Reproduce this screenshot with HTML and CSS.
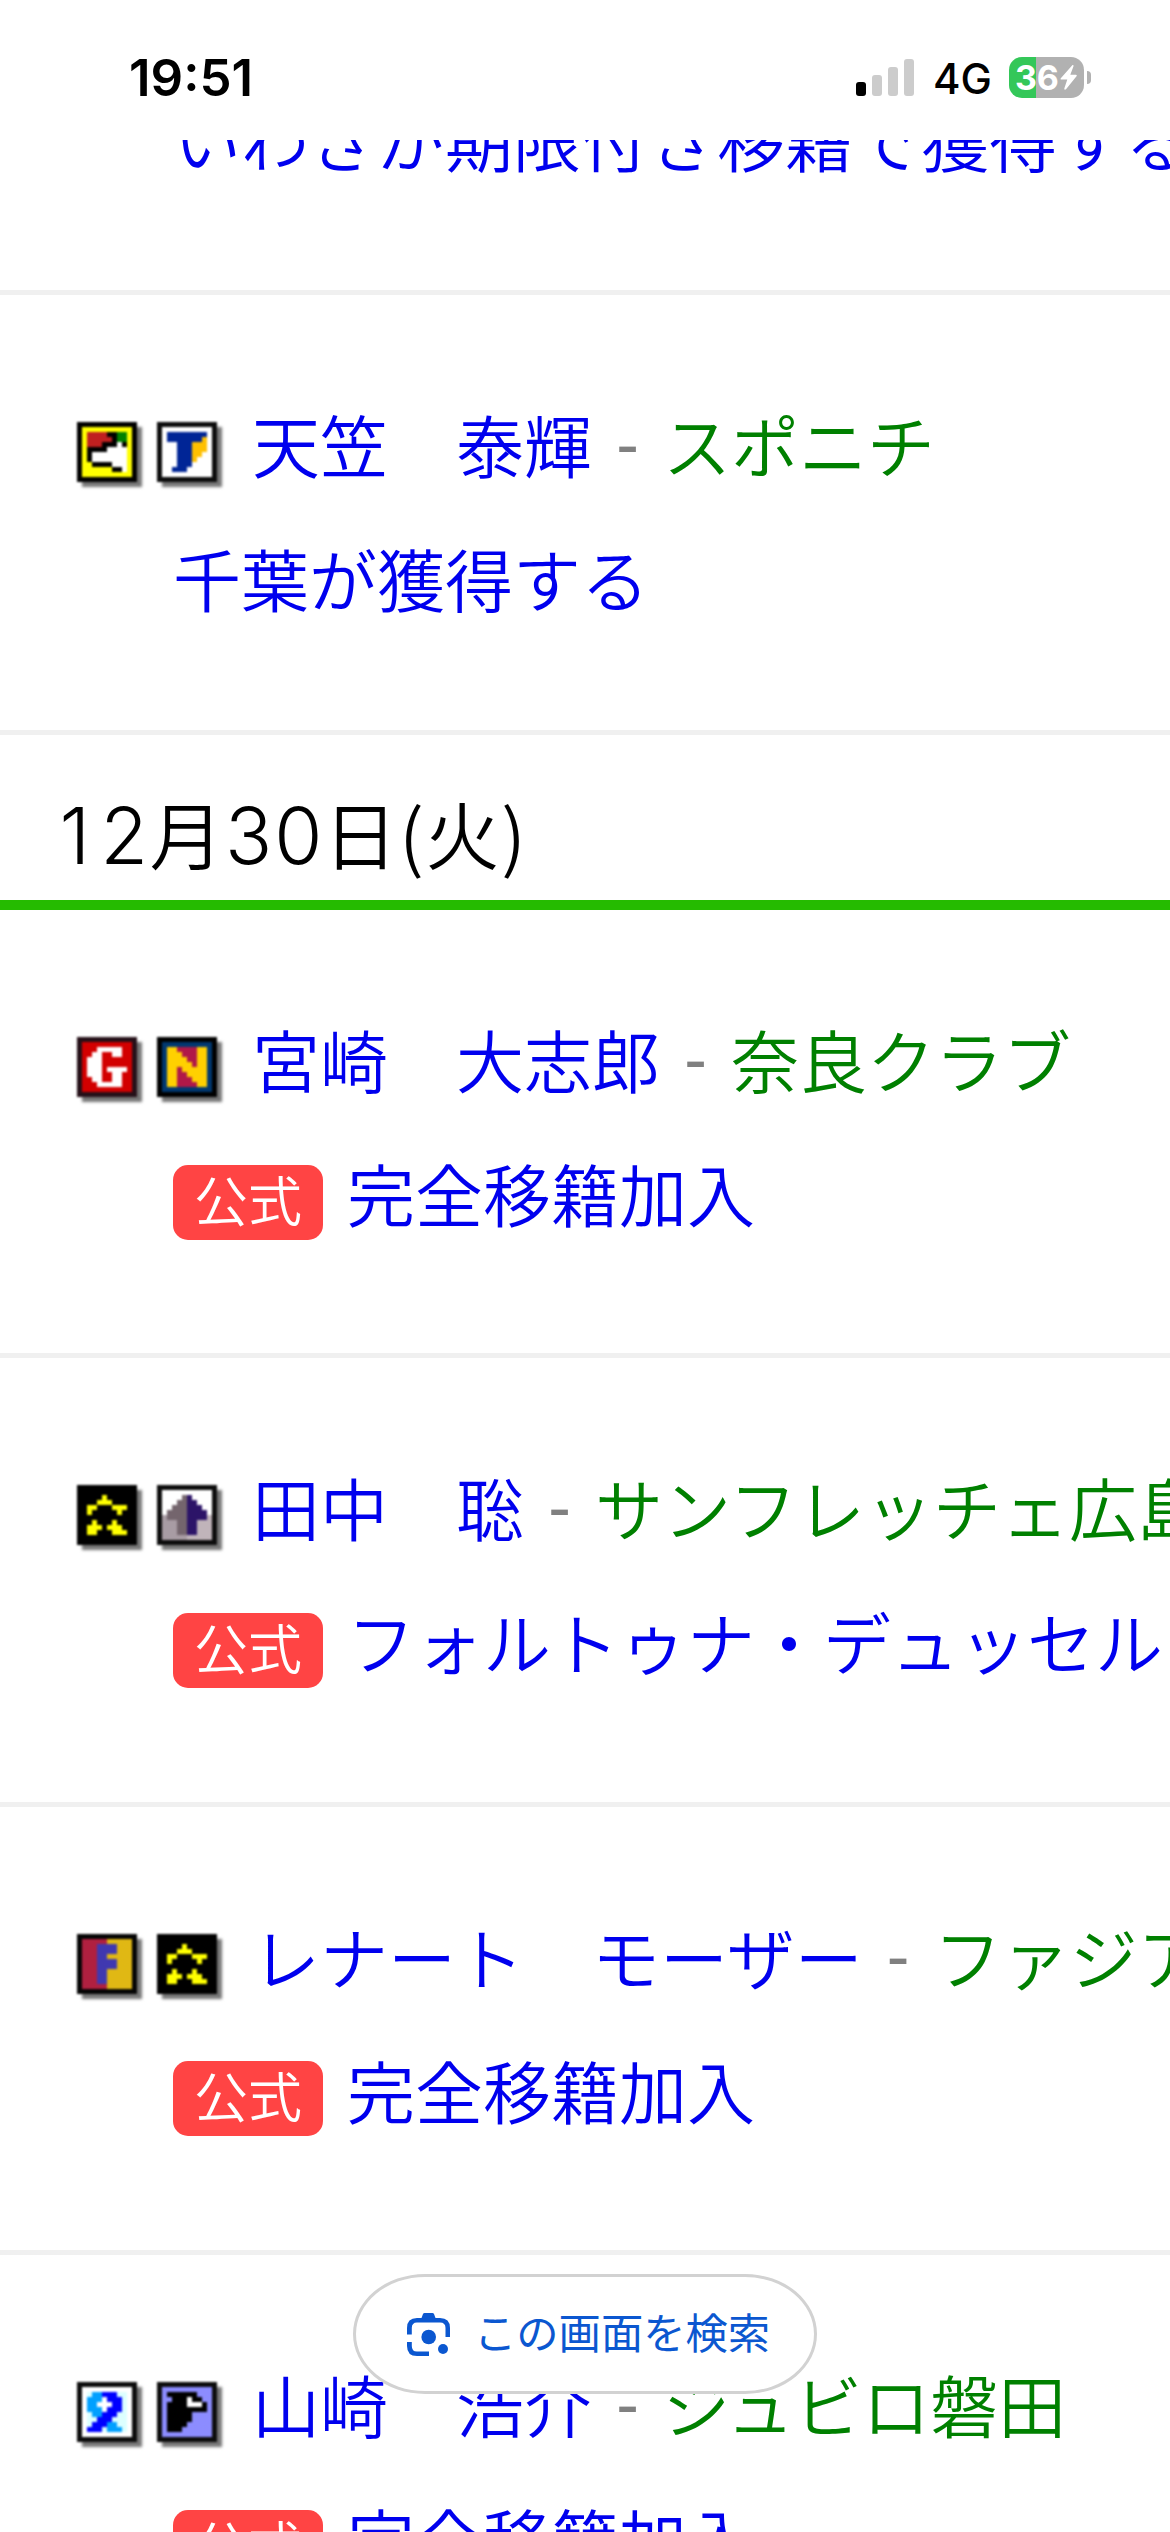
FILE: index.html
```
<!DOCTYPE html>
<html lang="ja">
<head>
<meta charset="utf-8">
<title>移籍情報</title>
<link rel="stylesheet" href="styles.css">
</head>
<body>
<svg class="defs" aria-hidden="true">
  <defs>
    <symbol id="stars" viewBox="0 0 12 12">
      <path fill="#000" d="M0 0h12v12H0z"/>
      <path fill="#ff0" d="M5 2h1v1h-1zM4 3h3v1h-3zM2 4h2v1h-2zM7 4h3v1h-3zM2 5h1v1h-1zM8 5h1v1h-1zM3 7h1v1h-1zM7 7h1v1h-1zM2 8h3v1h-3zM6 8h3v1h-3zM2 9h2v1h-2zM7 9h3v1h-3z"/>
    </symbol>
  </defs>
</svg>
<header class="status">
  <span class="time">19:51</span>
  <div class="indicators">
    <div class="signal"><i></i><i></i><i></i><i></i></div>
    <span class="network">4G</span>
    <div class="battery">
      <div class="cell"><span>36</span>
        <svg class="bolt" viewBox="0 0 17 25"><path d="M12.500 0 L.8 13.200 Q0 14.500 1.500 14.500H7.300L4.300 23.500Q4.300 25.500 6 24.300L16.500 11.300Q17.300 9.800 15.800 9.800H10.300L13.500 1.200Q13.600-.4 12.500 0z" fill="#fff"/></svg>
      </div>
      <i class="nub"></i>
    </div>
  </div>
</header>
<main class="feed">
  <article class="item first">
    <div class="detail"><a>いわきが期限付き移籍で獲得する</a></div>
  </article>

  <article class="item short">
    <div class="headline">
      <svg class="team" viewBox="0 0 12 12">
        <path fill="#000" d="M0 0h12v12H0z"/><path fill="#ff0" d="M1 1h10v10H1z"/>
        <path fill="#000" d="M6 2h2v2h-1v-1h-1zM7 3h1v2h-3v-1h2zM9 4h1v1h-1zM2 5h4v1h-3v2h-1zM3 8h4v1h-4zM7 9h2v1h-2z"/>
        <path fill="#c02020" d="M2 2h4v1h1v1h-2v1h-3z"/>
        <path fill="#008000" d="M8 2h2v2h-2z"/>
        <path fill="#fff" d="M8 4h1v1h1v5h-1v-1h-2v-1h-4v-2h3v-1h2z"/>
      </svg>
      <svg class="team" viewBox="0 0 12 12">
        <path fill="#0c0c0c" d="M0 0h12v12H0z"/><path fill="#fff" d="M1 1h10v10H1z"/>
        <path fill="#002596" d="M2 2h8v1h-1v1h-2v5h-1v1h-3v-1h1v-5h-2z"/>
        <path fill="#ffc000" d="M9 3h1v3h-1v1h-1v1h-1v-4h2z"/>
      </svg>
      <a class="name">天笠　泰輝</a><span class="dash">-</span><span class="source">スポニチ</span>
    </div>
    <div class="detail"><a>千葉が獲得する</a></div>
  </article>

  <h2 class="date"><span class="digit">1</span><span class="digit">2</span><span class="kanji">月</span><span class="digit">3</span><span class="digit">0</span><span class="kanji">日</span><span class="paren">(</span><span class="kanji">火</span><span class="paren">)</span></h2>

  <article class="item">
    <div class="headline">
      <svg class="team" viewBox="0 0 12 12">
        <path fill="#251018" d="M0 0h12v12H0z"/><path fill="#d20000" d="M1 1h10v10H1z"/>
        <path fill="#fff" d="M4 2h5v2h-2v-1h-2v6h2v-2h-1v-1h4v1h-1v3h-5v-1h-1v-1h-1v-4h1v-1h1z"/>
      </svg>
      <svg class="team" viewBox="0 0 12 12">
        <path fill="#000" d="M0 0h12v12H0z"/><path fill="#003870" d="M1 1h10v10H1z"/><path fill="#b01848" d="M2 2h8v8H2z"/>
        <path fill="#ffd000" d="M2 2h2v1h1v1h1v1h1v1h1v-4h2v8h-2v-1h-1v-1h-1v-1h-1v-1h-1v4h-2z"/>
      </svg>
      <a class="name">宮崎　大志郎</a><span class="dash">-</span><span class="source">奈良クラブ</span>
    </div>
    <div class="detail"><span class="badge">公式</span><a>完全移籍加入</a></div>
  </article>

  <article class="item">
    <div class="headline">
      <svg class="team"><use href="#stars"/></svg>
      <svg class="team" viewBox="0 0 12 12">
        <path fill="#0c0c0c" d="M0 0h12v12H0z"/><path fill="#fff" d="M1 1h10v5H1z"/>
        <path fill="#a89ca4" d="M1 6h5v5H1z"/><path fill="#c0b4ba" d="M6 6h5v5H6z"/>
        <path fill="#74656d" d="M5 2h1v8h-2v-3h-2v-2h1v-1h1v-1h1z"/>
        <path fill="#2c1468" d="M6 2h1v1h1v1h1v1h1v2h-2v3h-2z"/>
      </svg>
      <a class="name">田中　聡</a><span class="dash">-</span><span class="source">サンフレッチェ広島</span>
    </div>
    <div class="detail"><span class="badge">公式</span><a>フォルトゥナ・デュッセル</a></div>
  </article>

  <article class="item">
    <div class="headline">
      <svg class="team" viewBox="0 0 12 12">
        <path fill="#050505" d="M0 0h12v12H0z"/><path fill="#b02040" d="M1 1h5v10H1z"/><path fill="#e0b814" d="M6 1h5v10H6z"/>
        <path fill="#4038b0" d="M4 2h4v2h-2v1h2v2h-2v3h-2z"/>
      </svg>
      <svg class="team"><use href="#stars"/></svg>
      <a class="name">レナート　モーザー</a><span class="dash">-</span><span class="source">ファジア</span>
    </div>
    <div class="detail"><span class="badge">公式</span><a>完全移籍加入</a></div>
  </article>

  <article class="item">
    <div class="headline">
      <svg class="team" viewBox="0 0 12 12">
        <path fill="#0c0c0c" d="M0 0h12v12H0z"/><path fill="#fff" d="M1 1h10v10H1z"/>
        <path fill="#dcffff" d="M2 2h8v8H2z"/><path fill="#fff" d="M5 3h1v1h1v1h-1v1h-1v-1h-1v-1h1z"/>
        <path fill="#00a0ff" d="M3 2h2v2h-1v1h1v2h-2v-1h-1v-3h1zM6 8h2v1h1v1h-3z"/>
        <path fill="#00f" d="M5 2h3v1h1v3h-1v1h-1v1h-1v1h-1v1h-3v-1h1v-1h1v-1h1v-1h1v-1h1v-1h-1v-1h-1z"/>
      </svg>
      <svg class="team" viewBox="0 0 12 12">
        <path fill="#0c0c0c" d="M0 0h12v12H0z"/><path fill="#8c8cff" d="M1 1h10v10H1z"/>
        <path fill="#000" d="M2 2h6v1h1v1h1v2h-3v2h-1v1h-1v1h-3v-6h1v-1h-1z"/>
        <path fill="#fff" d="M6 3h1v1h2v1h-3z"/>
      </svg>
      <a class="name">山崎　浩介</a><span class="dash">-</span><span class="source">ジュビロ磐田</span>
    </div>
    <div class="detail"><span class="badge">公式</span><a>完全移籍加入</a></div>
  </article>
</main>
<button class="lens">
  <svg viewBox="0 0 43 43" fill="#0b57d0">
    <path d="M0 21.500V15Q0 5 10 5H14.500L16 1Q16.500 0 17.500 0H25.500Q26.500 0 27 1L28.500 5H33Q43 5 43 15V24H38.500V15Q38.500 9.500 33 9.500H10Q4.800 9.500 4.800 15V21.500zM0 29H4.800V33Q4.800 38.500 10 38.500H22V43H10Q0 43 0 33z"/>
    <circle cx="21.700" cy="24" r="7.300"/><circle cx="36" cy="36" r="5"/>
  </svg>
  <span>この画面を検索</span>
</button>
</body>
</html>
```
FILE: styles.css
```
* { box-sizing: border-box; }

body {
  margin: 0;
  width: 1170px;
  height: 2532px;
  overflow: hidden;
  display: flex;
  flex-direction: column;
  background: #fff;
  font-family: "Noto Sans CJK JP", sans-serif;
  font-weight: 350;
}

.defs { position: absolute; width: 0; height: 0; }

.status {
  flex: none;
  height: 140px;
  padding: 48px 79px 0 129px;
  display: flex;
  justify-content: space-between;
  align-items: flex-start;
  font-family: Inter, sans-serif;
  color: #000;
}

.time { font-size: 51px; line-height: 60px; font-weight: 600; }

.indicators { display: flex; align-items: flex-start; }

.signal { display: flex; align-items: flex-end; gap: 6px; height: 48px; }
.signal i { width: 10px; height: 37px; border-radius: 3px; background: #ccc; }
.signal i:nth-child(1) { height: 14px; background: #000; }
.signal i:nth-child(2) { height: 21px; }
.signal i:nth-child(3) { height: 29px; }

.network { width: 95px; padding-left: 19px; font-size: 42px; line-height: 62px; font-weight: 500; }

.battery { display: flex; align-items: center; gap: 3px; height: 41px; margin-top: 9px; }
.cell {
  width: 75px;
  height: 41px;
  border-radius: 13px;
  background: linear-gradient(90deg, #34c759 27px, #b1b1b1 27px);
  display: flex;
  align-items: center;
  padding-left: 6px;
  gap: 2px;
  color: #fff;
  font-size: 34px;
  font-weight: 700;
  letter-spacing: -0.3px;
}
.bolt { width: 17px; height: 25px; flex: none; }
.nub { width: 4px; height: 13px; border-radius: 0 4px 4px 0; background: #b1b1b1; }

.feed { flex: 1; min-height: 0; overflow: hidden; }

.item {
  display: flow-root;
  height: 448.4px;
  padding: 99px 0 0 77px;
  border-bottom: 5px solid #f0f0f0;
  font-size: 68px;
  white-space: nowrap;
  color: #00e;
}
.item.short { height: 440px; }
.item.first {
  height: 155px;
  padding-top: 0;
}
.item.first .detail { margin-top: -52px; }

.headline, .detail { display: flex; align-items: center; height: 100px; line-height: 100px; }
.headline > *, .detail > * { flex: none; }
.detail { margin-top: 34px; padding-left: 96px; }

.team {
  width: 60px;
  height: 60px;
  margin: 16px 20px 0 0;
  box-shadow: 5px 5px 2px #777;
  filter: blur(0.8px);
}
.name { padding-left: 15px; }
.dash { width: 71px; text-align: center; color: gray; font-family: "Liberation Sans", sans-serif; font-weight: 400; font-size: 68px; }
.source { color: green; }

.badge {
  width: 150px;
  height: 75px;
  margin: 18px 24px 0 0;
  border-radius: 15px;
  background: #f44;
  color: #fff;
  font-size: 54px;
  line-height: 68px;
  text-align: center;
}

.date {
  margin: 0;
  height: 175px;
  padding: 47px 0 0 50px;
  border-bottom: 10px solid #25bb00;
  display: flex;
  align-items: baseline;
  font-size: 74px;
  line-height: 100px;
  font-weight: 350;
  color: #000;
}
.date span { text-align: center; }
.digit { width: 49.5px; font-family: Inter, sans-serif; font-weight: 300; font-size: 78px; }
.kanji { width: 75px; }
.paren { width: 27px; }

.lens {
  position: absolute;
  left: 353px;
  top: 2274px;
  width: 464px;
  height: 120px;
  padding: 0 0 0 51px;
  border: 3px solid #d2d2d2;
  border-radius: 72px / 60px;
  background: #fff;
  display: flex;
  align-items: center;
  gap: 24px;
  font-family: "Noto Sans CJK JP", sans-serif;
  font-size: 42.3px;
  font-weight: 400;
  line-height: 60px;
  color: #0b57d0;
  white-space: nowrap;
}
.lens svg { width: 43px; height: 43px; flex: none; }
.lens span { margin-bottom: 6px; }
```
